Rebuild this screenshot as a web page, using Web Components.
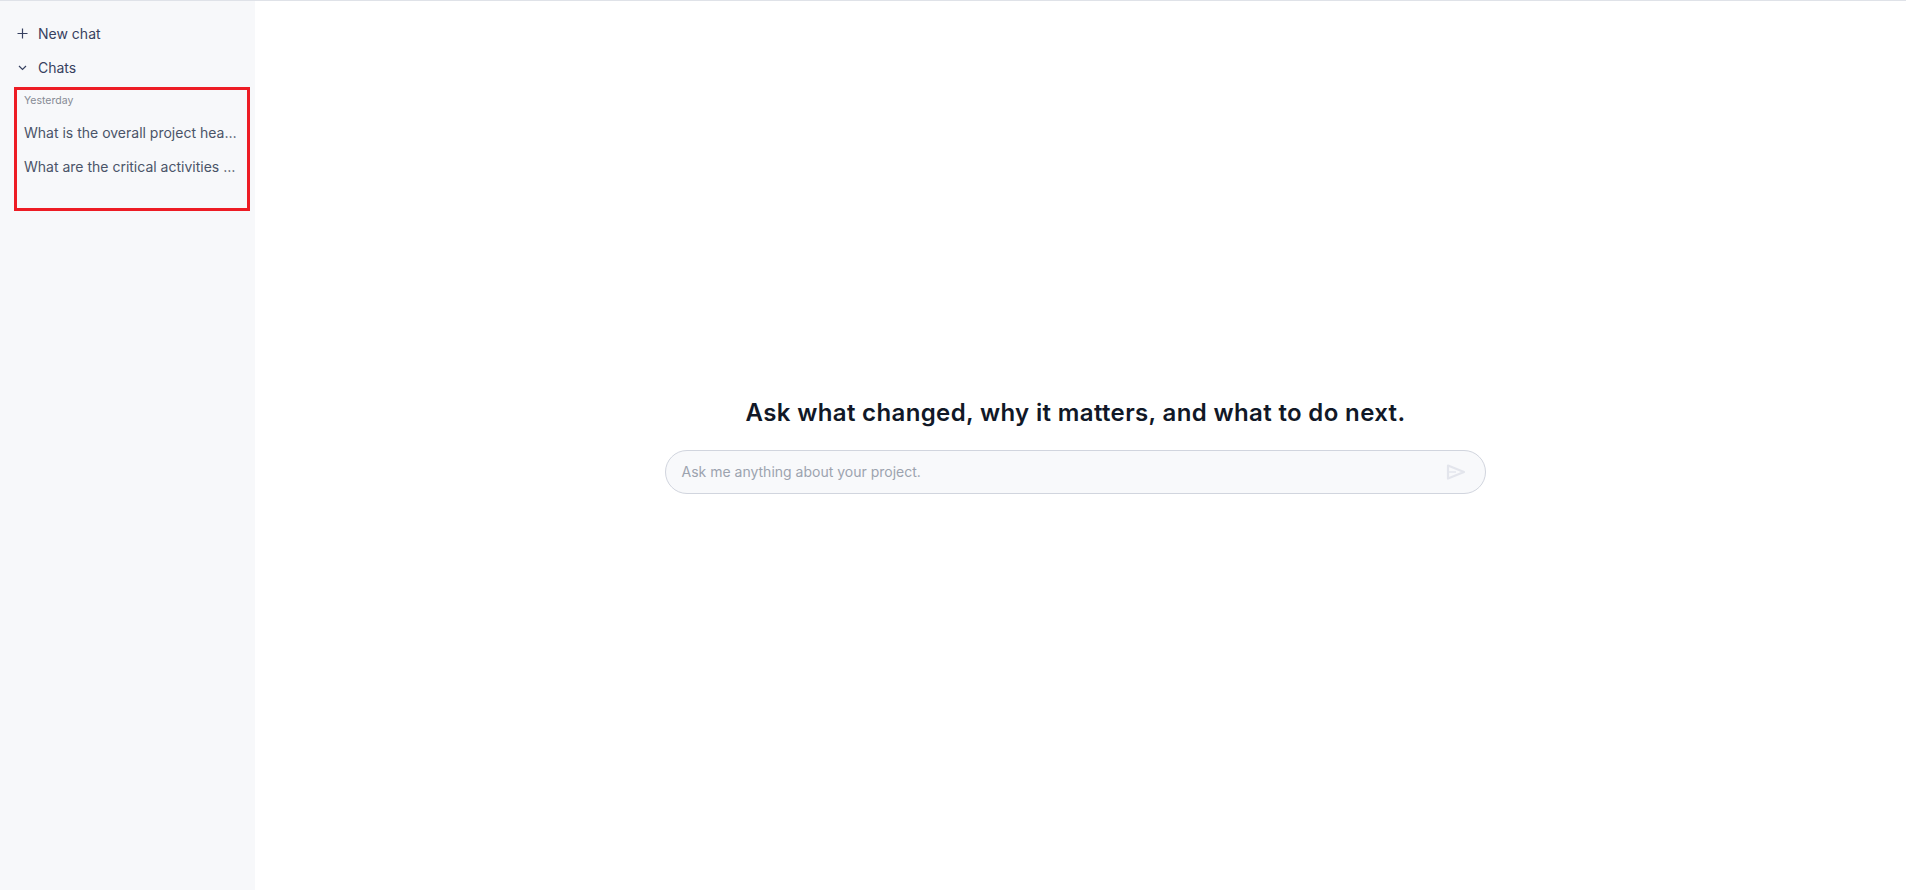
<!doctype html>
<html><head><meta charset="utf-8"><style>
html,body{margin:0;height:100%;background:#fff}
body{font-family:Inter,"Liberation Sans",sans-serif}
</style></head><body>
<template id="nav-t"><style>
:host{display:flex;align-items:center;height:34px;padding-left:17px;gap:10px;font-size:14px;color:#374160}
.i{width:11px;height:11px;display:flex}
svg{display:block}
</style><span class="i"><slot name="icon"></slot></span><span><slot></slot></span></template>
<template id="item-t"><style>
:host{display:block;height:34px;line-height:34px;font-size:14px;color:#4a5468;padding-left:10px;width:224px;box-sizing:border-box;white-space:nowrap;overflow:hidden;text-overflow:ellipsis}
</style><slot></slot></template>
<template id="side-t"><style>
:host{display:block;position:relative;width:255px;flex:none;background:#f7f8fa;padding-top:15px;box-sizing:border-box}
.group{padding:0 0 0 14px;margin-top:4px}
.day{font-size:10.5px;height:26px;line-height:26px;padding-left:10px;color:#868a94;margin-bottom:2px}
.mark{position:absolute;left:14px;top:86px;width:236px;height:124px;box-sizing:border-box;border:3px solid #ed1c24}
</style><slot name="nav"></slot><div class="group"><div class="day">Yesterday</div><slot></slot></div><div class="mark"></div></template>
<template id="composer-t"><style>
:host{display:flex;align-items:center;width:821px;height:44px;box-sizing:border-box;border:1px solid #d1d5de;border-radius:22px;background:#f8f9fb;padding:0 19px 0 15.5px;font-size:14px;color:#9ca3af;justify-content:space-between}
svg{display:block}
</style><span><slot></slot></span><svg width="20" height="18" viewBox="0 0 20 18" fill="none" stroke="#e3e5ec" stroke-width="2.2" stroke-linejoin="round"><path d="M2 2.5 L18 9 L2 15.5 Z"/><path d="M2 9 H10" stroke-width="1.4"/></svg></template>
<template id="main-t"><style>
:host{display:flex;flex:1;flex-direction:column;align-items:center;justify-content:center;gap:20px;padding:0 10px 2px 0}
h1{margin:0;font-size:24px;line-height:34px;font-weight:600;color:#111827;letter-spacing:.36px}
</style><h1><slot name="title"></slot></h1><slot></slot></template>
<template id="shell-t"><style>
:host{display:flex;height:890px;box-sizing:border-box;border-top:1px solid #dfe2e8}
</style><slot></slot></template>

<app-shell>
 <chat-sidebar>
  <nav-row slot="nav"><svg slot="icon" width="11" height="11" viewBox="0 0 11 11" stroke="#374160" stroke-width="1.2" fill="none"><path d="M5.5 0.5V10.5M0.5 5.5H10.5"/></svg>New chat</nav-row>
  <nav-row slot="nav"><svg slot="icon" width="11" height="11" viewBox="0 0 11 11" stroke="#374160" stroke-width="1.2" fill="none"><path d="M2 4L5.5 7.5L9 4"/></svg>Chats</nav-row>
  <chat-item>What is the overall project health?</chat-item>
  <chat-item>What are the critical activities at risk?</chat-item>
 </chat-sidebar>
 <chat-main>
  <span slot="title">Ask what changed, why it matters, and what to do next.</span>
  <chat-composer>Ask me anything about your project.</chat-composer>
 </chat-main>
</app-shell>
<script>
for (const [tag,id] of [['app-shell','shell-t'],['chat-sidebar','side-t'],['nav-row','nav-t'],['chat-item','item-t'],['chat-main','main-t'],['chat-composer','composer-t']]) {
  customElements.define(tag, class extends HTMLElement {
    constructor(){super();this.attachShadow({mode:'open'}).appendChild(document.getElementById(id).content.cloneNode(true));}
  });
}
</script>
</body></html>
